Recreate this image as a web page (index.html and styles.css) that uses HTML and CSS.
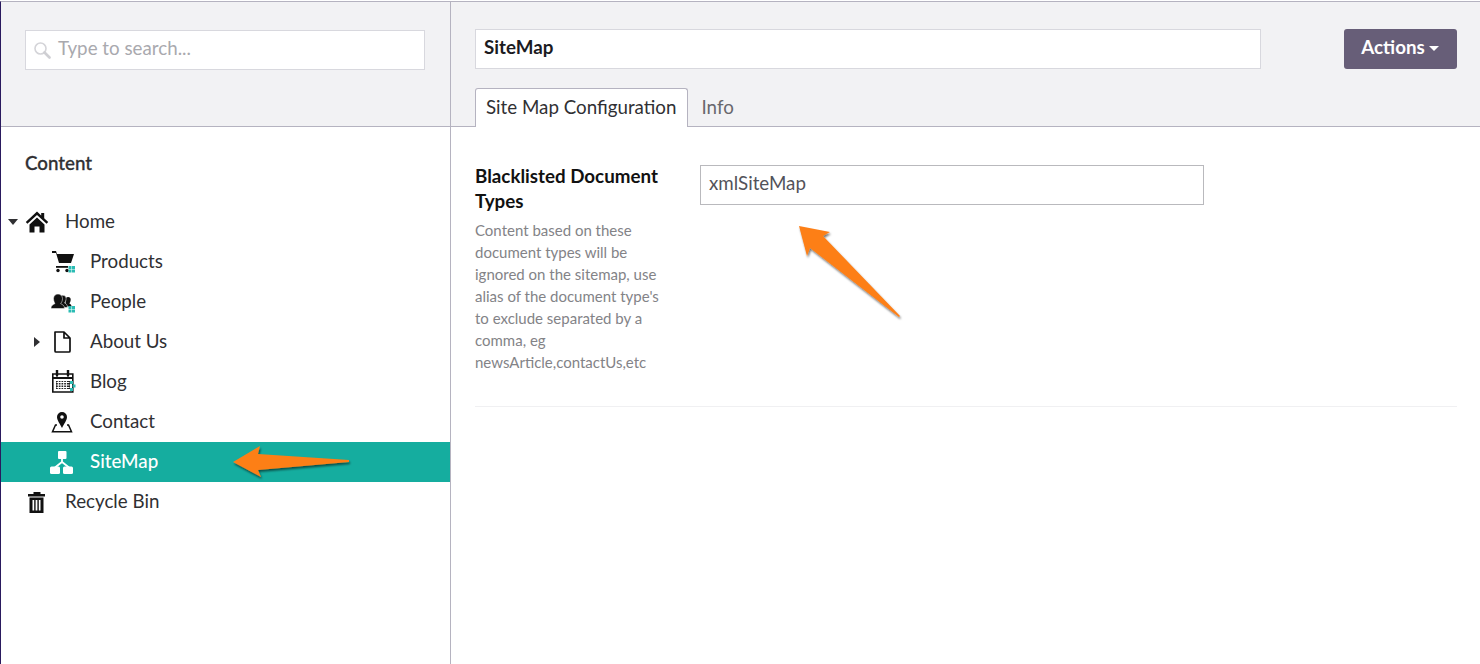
FILE: index.html
```html
<!DOCTYPE html>
<html lang="en">
<head>
    <meta charset="UTF-8">
    <title>SiteMap - Content</title>
    <link rel="stylesheet" href="styles.css">
</head>
<body>
    <div class="app">
        <aside class="sidebar">
            <div class="search-band">
                <div class="search">
                    <svg class="search-icon" width="18" height="18" viewBox="0 0 18 18"><circle cx="7.500" cy="7.500" r="5.500" fill="none" stroke="#d4d4d8" stroke-width="1.600"/><path d="M11.500 11.500l5 5" stroke="#cfcfd3" stroke-width="2.600" stroke-linecap="round"/></svg>
                    <span>Type to search...</span>
                </div>
            </div>
            <div class="tree-title">Content</div>
            <ul class="tree">
                <li class="node">
                    <span class="caret caret-down"></span>
                    <svg class="icon" width="24" height="24" viewBox="0 0 24 24"><path d="M12 1.500L.8 12l1.600 1.800L12 5l9.600 8.800L23.200 12l-4-3.700V3h-3v2.500z" fill="#111"/><path d="M4.500 14.500L12 7.500l7.500 7v8H14.500v-6h-5v6h-5z" fill="#111"/></svg>
                    <span class="label">Home</span>
                </li>
                <li class="node child">
                    <svg class="icon" width="26" height="24" viewBox="0 0 26 24"><path d="M2 1h4l1 3h17l-3 9H9L6 3H2z" fill="#111"/><path d="M6 16h12v1.800H6z" fill="#111"/><circle cx="8" cy="20.500" r="1.700" fill="#111"/><circle cx="17" cy="20.500" r="1.700" fill="#111"/><path d="M18.500 16h3v3h-3zM22 16h3v3h-3zM18.500 19.500h3v3h-3zM22 19.500h3v3h-3z" fill="#2bbcb4"/></svg>
                    <span class="label">Products</span>
                </li>
                <li class="node child">
                    <svg class="icon" width="26" height="24" viewBox="0 0 26 24"><g transform="translate(0 2)"><path d="M15.500 7.500a2.600 2.600 0 0 1 5.200 0c0 2-.8 3-1.300 4 .9.600 2.100 1 2.100 3h-6z" fill="#111"/><path d="M9.500 6.500a3.300 3.300 0 0 1 6.600 0c0 2.200-.9 3.500-1.500 4.500 1.100.7 2.900 1.200 2.900 4.500H9z" fill="#111" stroke="#fff" stroke-width=".5"/><path d="M3.500 6.500a4.500 4.500 0 0 1 9 0c0 2.500-1 4-1.900 5.200 1.500.8 3.900 1.300 3.900 4.800H1c0-3.500 2.400-4 3.900-4.800C4.500 10.500 3.500 9 3.500 6.500z" fill="#111" stroke="#fff" stroke-width=".5"/></g><path d="M18.500 16h3v3h-3zM22 16h3v3h-3zM18.500 19.500h3v3h-3zM22 19.500h3v3h-3z" fill="#2bbcb4"/></svg>
                    <span class="label">People</span>
                </li>
                <li class="node child">
                    <span class="caret caret-right"></span>
                    <svg class="icon" width="26" height="24" viewBox="0 0 26 24"><path d="M5 2h9l6 6v13a1 1 0 0 1-1 1H6a1 1 0 0 1-1-1z M14 2v6h6" fill="none" stroke="#111" stroke-width="1.700" stroke-linejoin="round"/></svg>
                    <span class="label">About Us</span>
                </li>
                <li class="node child">
                    <svg class="icon" width="26" height="24" viewBox="0 0 26 24"><path d="M2.800 4h20v18h-20z" fill="none" stroke="#111" stroke-width="1.600"/><path d="M7 0v5.500M18 0v5.500" stroke="#111" stroke-width="2.400" stroke-linecap="round"/><path d="M3 7h20v2H3z" fill="#111"/><path d="M6 11h14v8H6z" fill="#222"/><path d="M6.500 12.500h13M6.500 15h13M6.500 17.500h13M8.300 11v8M11 11v8M13.700 11v8M16.400 11v8" stroke="#fff" stroke-width="1" fill="none"/><path d="M20 11h3v3h-3zM22.500 14.500h3v3h-3zM20 18h3v3h-3z" fill="#2bbcb4"/></svg>
                    <span class="label">Blog</span>
                </li>
                <li class="node child">
                    <svg class="icon" width="26" height="24" viewBox="0 0 26 24"><path fill-rule="evenodd" d="M12 2a5 5 0 0 1 5 5c0 3-3 7-5 11-2-4-5-8-5-11a5 5 0 0 1 5-5zm0 3.200a1.800 1.800 0 1 0 0 3.600 1.800 1.800 0 0 0 0-3.600z" fill="#111"/><path d="M7 15H5.500L2.500 21.800h19L18.500 15H17" fill="none" stroke="#111" stroke-width="1.500"/></svg>
                    <span class="label">Contact</span>
                </li>
                <li class="node child active">
                    <svg class="icon" width="26" height="24" viewBox="0 0 26 24"><rect x="8" y="1" width="8.500" height="8" rx="1" fill="#fff"/><rect x="0" y="16.500" width="10" height="7.500" rx="1.500" fill="#fff"/><rect x="13" y="16.500" width="10" height="7.500" rx="1.500" fill="#fff"/><path d="M12 8v4M5 17.500l7-5.500 7 5.500" fill="none" stroke="#fff" stroke-width="1.800"/></svg>
                    <span class="label">SiteMap</span>
                </li>
                <li class="node">
                    <svg class="icon" width="24" height="24" viewBox="0 0 24 24"><path d="M8.500 4V2h7v2H20v2.500H3V4z" fill="#111"/><path fill-rule="evenodd" d="M4.500 7.500h14V23h-14zM7.500 10v10.500h1.700V10zm3.100 0v10.500h1.800V10zm3.200 0v10.500h1.700V10z" fill="#111"/></svg>
                    <span class="label">Recycle Bin</span>
                </li>
            </ul>
        </aside>
        <main class="main">
            <header class="main-header">
                <div class="title-row">
                    <div class="name-input">SiteMap</div>
                    <button class="actions">Actions<span class="actions-caret"></span></button>
                </div>
                <nav class="tabs">
                    <a class="tab tab-active">Site Map Configuration</a>
                    <a class="tab">Info</a>
                </nav>
            </header>
            <section class="panel">
                <div class="field">
                    <div class="field-info">
                        <h4>Blacklisted Document Types</h4>
                        <p>Content based on these document types will be ignored on the sitemap, use alias of the document type's to exclude separated by a comma, eg newsArticle,contactUs,etc</p>
                    </div>
                    <div class="field-value">xmlSiteMap</div>
                </div>
            </section>
        </main>
    </div>

    <!-- screenshot annotations -->
    <svg class="annotation arrow-tree" width="130" height="44" viewBox="0 0 130 44">
        <defs><filter id="shadow" x="-20%" y="-30%" width="140%" height="170%"><feDropShadow dx="1" dy="2" stdDeviation="1.300" flood-color="#000" flood-opacity="0.55"/></filter></defs>
        <path d="M3 23L30 7l-2 8 91 6v2l-91 8 3 7z" fill="#fd7f17" filter="url(#shadow)"/>
    </svg>
    <svg class="annotation arrow-field" width="120" height="110" viewBox="0 0 120 110">
        <defs><filter id="shadow2" x="-20%" y="-20%" width="140%" height="140%"><feDropShadow dx="1" dy="2" stdDeviation="1.300" flood-color="#000" flood-opacity="0.55"/></filter></defs>
        <path d="M9 6l31 6-7 4 77 80-1 1-89-69-3 8z" fill="#fd7f17" filter="url(#shadow2)"/>
    </svg>
</body>
</html>
```

FILE: styles.css
```css
* {
    box-sizing: border-box;
}
html, body {
    margin: 0;
    height: 100%;
    overflow: hidden;
}
body {
    font-family: 'Lato', sans-serif;
    background: #fff;
    color: #303033;
    padding-top: 1px;
}
.app {
    display: flex;
    height: 663px;
    border-top: 1px solid #b5b3c0;
    border-left: 1px solid #2a1a5e;
}
.sidebar {
    width: 450px;
    flex: none;
    border-right: 1px solid #b5b3c0;
}
.search-band {
    height: 125px;
    padding: 28px 25px 0 24px;
    background: #f2f2f4;
    border-bottom: 1px solid #b5b3c0;
}
.search {
    display: flex;
    align-items: center;
    height: 40px;
    padding: 0 0 5px 7px;
    background: #fff;
    border: 1px solid #d8d8de;
    font-size: 18.75px;
    color: #a9a9ae;
}
.search-icon {
    margin: 5px 7px 0 0;
}
.tree-title {
    padding: 25px 0 0 24px;
    height: 75px;
    font-size: 18.75px;
    font-weight: 500;
    line-height: 22px;
    -webkit-text-stroke: 0.3px #303033;
}
.tree {
    list-style: none;
    margin: 0;
    padding: 0;
}
.node {
    position: relative;
    display: flex;
    align-items: center;
    height: 40px;
    padding-left: 24px;
    font-size: 18.75px;
    color: #303033;
}
.node .icon {
    flex: none;
}
.node .label {
    margin: -4px 0 0 16px;
}
.child {
    padding-left: 49px;
}
.child .label {
    margin-left: 14px;
}
.active {
    background: #15ad9f;
    color: #fff;
    font-weight: 500;
}
.caret {
    position: absolute;
    width: 0;
    height: 0;
}
.caret-down {
    left: 7px;
    top: 17px;
    border-left: 5px solid transparent;
    border-right: 5px solid transparent;
    border-top: 6px solid #303033;
}
.caret-right {
    left: 33px;
    top: 15px;
    border-top: 5px solid transparent;
    border-bottom: 5px solid transparent;
    border-left: 6px solid #303033;
}
.main {
    flex: 1;
    min-width: 0;
}
.main-header {
    height: 125px;
    padding: 27px 23px 0 24px;
    background: #f2f2f4;
    border-bottom: 1px solid #b5b3c0;
}
.title-row {
    display: flex;
    justify-content: space-between;
}
.name-input {
    width: 786px;
    height: 40px;
    padding-left: 8px;
    background: #fff;
    border: 1px solid #d8d8de;
    font-size: 18.75px;
    font-weight: 700;
    line-height: 33px;
    color: #1b1b1f;
}
.actions {
    width: 113px;
    height: 40px;
    padding: 0 1px 5px 0;
    font-family: inherit;
    font-size: 18.75px;
    font-weight: 700;
    color: #fff;
    background: #675e78;
    border: none;
    border-radius: 3px;
}
.actions-caret {
    display: inline-block;
    margin-left: 4px;
    vertical-align: 3px;
    border-left: 5px solid transparent;
    border-right: 5px solid transparent;
    border-top: 5px solid #fff;
}
.tabs {
    display: flex;
    margin-top: 19px;
}
.tab {
    height: 39px;
    padding: 0 13px;
    font-size: 18.75px;
    line-height: 38px;
    color: #68686d;
}
.tab-active {
    padding: 0 11px 0 10px;
    line-height: 36px;
    color: #303033;
    background: #fff;
    border: 1px solid #b5b3c0;
    border-bottom: none;
    border-radius: 3px 3px 0 0;
}
.panel {
    padding: 36px 23px 0 24px;
}
.field {
    display: flex;
    align-items: flex-start;
    height: 244px;
    border-bottom: 1px solid #f0f0f2;
}
.field-info {
    width: 225px;
    flex: none;
}
.field-info h4 {
    width: 195px;
    margin: 0;
    font-size: 18.75px;
    font-weight: 700;
    line-height: 25px;
    color: #111;
}
.field-info p {
    width: 190px;
    margin: 6px 0 0;
    font-size: 15px;
    line-height: 22px;
    color: #838387;
}
.field-value {
    width: 504px;
    height: 40px;
    margin-top: 2px;
    padding-left: 8px;
    border: 1px solid #b9b9bd;
    font-size: 18.75px;
    line-height: 34px;
    color: #52525a;
}
.annotation {
    position: absolute;
    overflow: visible;
}
.arrow-tree {
    left: 230px;
    top: 439px;
}
.arrow-field {
    left: 790px;
    top: 220px;
}
```
